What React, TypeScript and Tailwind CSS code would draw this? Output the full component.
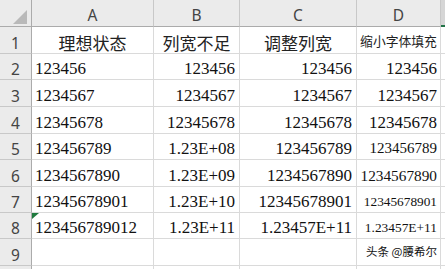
const rows = [
  { a: "123456", b: "123456", c: "123456", d: "123456", dSize: "text-[17px]" },
  { a: "1234567", b: "1234567", c: "1234567", d: "1234567", dSize: "text-[17px]" },
  { a: "12345678", b: "12345678", c: "12345678", d: "12345678", dSize: "text-[17px]" },
  { a: "123456789", b: "1.23E+08", c: "123456789", d: "123456789", dSize: "text-[15px]" },
  { a: "1234567890", b: "1.23E+09", c: "1234567890", d: "1234567890", dSize: "text-[15.3px]" },
  { a: "12345678901", b: "1.23E+10", c: "12345678901", d: "12345678901", dSize: "text-[13.3px]" },
  { a: "123456789012", b: "1.23E+11", c: "1.23457E+11", d: "1.23457E+11", dSize: "text-[13.4px]" },
];

const colHead =
  "flex items-end justify-center pb-[2px] bg-[#ebebeb] border-r border-b border-r-[#c8c8c8] border-b-[#ababab] text-[15.5px] leading-[18px] text-[#444] [font-family:Noto_Sans,sans-serif]";
const rowHead =
  "flex items-end justify-center pb-[1px] bg-[#ebebeb] border-r border-b border-r-[#ababab] border-b-[#c8c8c8] text-[15.5px] leading-[18px] text-[#444] [font-family:Noto_Sans,sans-serif]";
const cell = "relative flex items-end border-r border-b border-[#dadada] text-[#111] leading-[17px] pb-[2px]";
const num = "[font-family:Liberation_Serif,serif]";
const cjk = "[font-family:Noto_Sans_CJK_SC,sans-serif]";

export default function App() {
  return (
    <div className="w-[445px] h-[269px] overflow-hidden bg-white">
      <div className="grid grid-cols-[32px_122px_86px_117px_84px_1fr] grid-rows-[27px_27px_26px_27px_27px_26px_27px_26px_26px_27px_1fr] h-full">
        {/* corner */}
        <div className="relative bg-[#ebebeb] border-r border-b border-r-[#ababab] border-b-[#ababab]">
          <div className="absolute left-[13px] top-[10px] w-0 h-0 border-l-[14px] border-l-transparent border-b-[14px] border-b-[#b9b9b9]" />
        </div>
        <div className={colHead}>A</div>
        <div className={colHead}>B</div>
        <div className={colHead}>C</div>
        <div className={colHead}>D</div>
        <div className="bg-[#d6d6d6] border-b-2 border-[#217346]" />

        {/* row 1 */}
        <div className={rowHead}>1</div>
        <div className={`${cell} ${cjk} justify-center text-[17px] text-[#222]`}>理想状态</div>
        <div className={`${cell} ${cjk} justify-center text-[17px] text-[#222]`}>列宽不足</div>
        <div className={`${cell} ${cjk} justify-center text-[17px] text-[#222]`}>调整列宽</div>
        <div className={`${cell} ${cjk} justify-center text-[12.8px] pb-[4px] text-[#222]`}>缩小字体填充</div>
        <div className="border-b border-[#dadada]" />

        {rows.map((r, i) => (
          <div key={i} className="contents">
            <div className={rowHead}>{i + 2}</div>
            <div className={`${cell} ${num} text-[17px] pl-[3px]`}>
              {i === 6 && (
                <div className="absolute left-0 top-0 w-0 h-0 border-t-[6px] border-t-[#1f7a3e] border-r-[7px] border-r-transparent" />
              )}
              {r.a}
            </div>
            <div className={`${cell} ${num} text-[17px] justify-end pr-[4px]`}>{r.b}</div>
            <div className={`${cell} ${num} text-[17px] justify-end pr-[4px]`}>{r.c}</div>
            <div className={`${cell} ${num} ${r.dSize} justify-end pr-[3px]`}>{r.d}</div>
            <div className="border-b border-[#dadada]" />
          </div>
        ))}

        {/* row 9 */}
        <div className={rowHead}>9</div>
        <div className={cell} />
        <div className={cell} />
        <div className={cell} />
        <div className={`${cell} ${cjk} justify-end pr-[3px] pb-[5px] text-[11.5px] leading-[12px] text-[#8a8a8a]`}>
          头条 @腰希尔
        </div>
        <div className="border-b border-[#dadada]" />

        {/* row 10 sliver */}
        <div className="bg-[#ebebeb] border-r border-r-[#ababab]" />
        <div className="border-r border-[#dadada]" />
        <div className="border-r border-[#dadada]" />
        <div className="border-r border-[#dadada]" />
        <div className="border-r border-[#dadada]" />
        <div />
      </div>
    </div>
  );
}
